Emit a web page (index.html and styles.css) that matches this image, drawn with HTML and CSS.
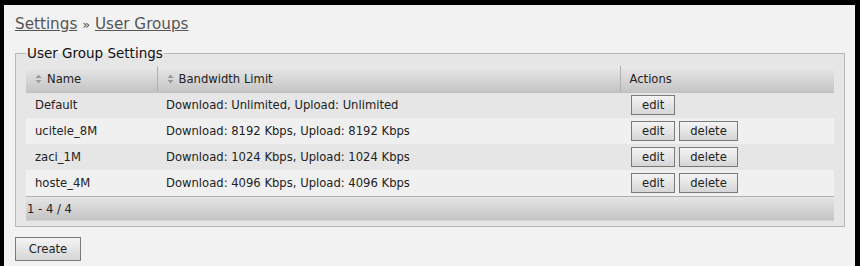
FILE: index.html
```html
<!DOCTYPE html>
<html>
<head>
<meta charset="utf-8">
<link rel="stylesheet" href="styles.css">
</head>
<body>
<div class="page">
  <h1 class="crumbs"><a href="#">Settings</a> <span class="sep">»</span> <a href="#">User Groups</a></h1>
  <fieldset class="box">
    <legend>User Group Settings</legend>
    <table class="grid">
      <thead>
        <tr>
          <th class="c-name"><svg class="sort" viewBox="0 0 7 10" width="7" height="10"><polygon points="0.5,4 3.5,0.5 6.5,4"/><polygon points="0.5,6 6.5,6 3.5,9.5"/></svg>Name</th>
          <th class="c-bw"><svg class="sort" viewBox="0 0 7 10" width="7" height="10"><polygon points="0.5,4 3.5,0.5 6.5,4"/><polygon points="0.5,6 6.5,6 3.5,9.5"/></svg>Bandwidth Limit</th>
          <th class="c-act">Actions</th>
        </tr>
      </thead>
      <tbody>
        <tr class="odd"><td>Default</td><td>Download: Unlimited, Upload: Unlimited</td><td><button class="btn">edit</button></td></tr>
        <tr class="even"><td>ucitele_8M</td><td>Download: 8192 Kbps, Upload: 8192 Kbps</td><td><button class="btn">edit</button><button class="btn">delete</button></td></tr>
        <tr class="odd"><td>zaci_1M</td><td>Download: 1024 Kbps, Upload: 1024 Kbps</td><td><button class="btn">edit</button><button class="btn">delete</button></td></tr>
        <tr class="even"><td>hoste_4M</td><td>Download: 4096 Kbps, Upload: 4096 Kbps</td><td><button class="btn">edit</button><button class="btn">delete</button></td></tr>
      </tbody>
      <tfoot>
        <tr><td colspan="3">1 - 4 / 4</td></tr>
      </tfoot>
    </table>
  </fieldset>
  <button class="btn create">Create</button>
</div>
</body>
</html>
```
FILE: styles.css
```css
html, body {
  margin: 0;
  padding: 0;
  background: #000;
}
body {
  padding: 5px 5px 0 4px;
  font-family: "DejaVu Sans", Verdana, sans-serif;
  font-size: 11.6px;
  color: #222;
}
.page {
  background: #f2f2f2;
  height: 261px;
  padding: 9px 10px 0 11px;
  box-sizing: border-box;
}
.crumbs {
  margin: 0;
  font-size: 15.2px;
  font-weight: normal;
  line-height: 20px;
  color: #555;
}
.crumbs a {
  color: #555;
  text-decoration: underline;
}
.crumbs .sep {
  font-size: 13px;
}
.box {
  margin: 10px 0 0 0;
  padding: 5px 10px 5px 10px;
  border: 1px solid #b8b8b8;
  background: #e6e6e6;
}
.box legend {
  font-size: 13.5px;
  color: #111;
  padding: 0 1px;
  margin-left: 0;
}
.grid {
  width: 100%;
  border-collapse: collapse;
}
.grid th {
  height: 26px;
  padding: 0 9px;
  text-align: left;
  font-weight: normal;
  color: #222;
  background: linear-gradient(#e9e9e9, #c4c4c4);
  border-bottom: 1px solid #c0c0c0;
  box-sizing: border-box;
}
.grid th.c-name { width: 131px; }
.grid th.c-bw { width: 463px; border-left: 1px solid #b0b0b0; }
.grid th.c-act { border-left: 1px solid #b0b0b0; }
.sort {
  fill: #9a9a9a;
  margin-right: 5px;
  vertical-align: -1px;
}
.grid td {
  height: 26px;
  padding: 0 9px;
  box-sizing: border-box;
}
.grid tr.odd td { background: #e6e6e6; }
.grid tr.even td { background: #f0f0f0; }
.grid tfoot td {
  height: 25px;
  padding: 0 1px;
  background: linear-gradient(#e6e6e6, #c2c2c2);
  border-top: 1px solid #b0b0b0;
}
.btn {
  font-family: "DejaVu Sans", Verdana, sans-serif;
  font-size: 11.6px;
  color: #222;
  height: 20px;
  padding: 0 10px;
  margin: 0 4px 0 0;
  border: 1px solid #7a7a7a;
  border-radius: 0;
  background: linear-gradient(#f4f4f4, #d6d6d6);
  vertical-align: middle;
}
.grid td .btn { margin-left: 2px; margin-right: 2px; }
.create {
  margin-top: 10px;
  height: 24px;
  width: 66px;
  padding: 0;
}
```
